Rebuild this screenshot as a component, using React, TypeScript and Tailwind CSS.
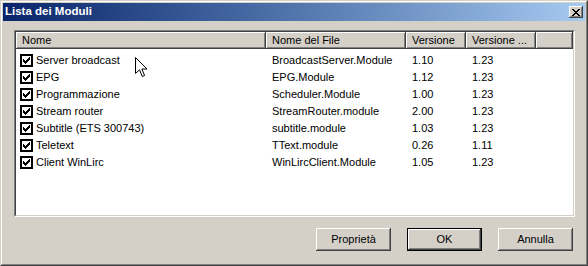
const rows = [
  { name: 'Server broadcast', file: 'BroadcastServer.Module', ver: '1.10', ver2: '1.23' },
  { name: 'EPG', file: 'EPG.Module', ver: '1.12', ver2: '1.23' },
  { name: 'Programmazione', file: 'Scheduler.Module', ver: '1.00', ver2: '1.23' },
  { name: 'Stream router', file: 'StreamRouter.module', ver: '2.00', ver2: '1.23' },
  { name: 'Subtitle (ETS 300743)', file: 'subtitle.module', ver: '1.03', ver2: '1.23' },
  { name: 'Teletext', file: 'TText.module', ver: '0.26', ver2: '1.11' },
  { name: 'Client WinLirc', file: 'WinLircClient.Module', ver: '1.05', ver2: '1.23' },
]

const raised =
  'shadow-[inset_-1px_-1px_#404040,inset_1px_1px_#ffffff,inset_-2px_-2px_#808080]'

function CheckBox() {
  return (
    <svg width="13" height="13" viewBox="0 0 13 13" shapeRendering="crispEdges">
      <rect x="0" y="0" width="13" height="13" fill="#000" />
      <rect x="2" y="2" width="9" height="9" fill="#fff" />
      <rect x="9" y="3" width="1" height="1" fill="#000" />
      <rect x="8" y="4" width="2" height="1" fill="#000" />
      <rect x="3" y="5" width="1" height="1" fill="#000" />
      <rect x="7" y="5" width="3" height="1" fill="#000" />
      <rect x="3" y="6" width="2" height="1" fill="#000" />
      <rect x="6" y="6" width="3" height="1" fill="#000" />
      <rect x="3" y="7" width="5" height="1" fill="#000" />
      <rect x="4" y="8" width="3" height="1" fill="#000" />
      <rect x="5" y="9" width="1" height="1" fill="#000" />
    </svg>
  )
}

function Cursor() {
  return (
    <svg
      width="14"
      height="22"
      viewBox="0 0 14 22"
      className="absolute left-[134px] top-[56px]"
    >
      <path
        d="M0.5 0.5 L0.5 16.5 L4.5 12.8 L7.3 19.5 L9.6 18.5 L6.9 12 L12 12 Z"
        fill="#fff"
        stroke="#000"
        strokeWidth="1"
        strokeLinejoin="miter"
      />
    </svg>
  )
}

function HeaderCell({ label, w }: { label: string; w: string }) {
  return (
    <div className={`${w} ${raised} flex h-full shrink-0 items-center bg-[#d4d0c8] pl-[6px]`}>
      {label}
    </div>
  )
}

function Button({ label, primary }: { label: string; primary?: boolean }) {
  return (
    <button
      className={`flex h-[23px] w-[75px] items-center justify-center bg-[#d4d0c8] text-black ${
        primary
          ? 'border border-black shadow-[inset_-1px_-1px_#404040,inset_1px_1px_#ffffff,inset_-2px_-2px_#808080]'
          : raised
      }`}
    >
      {label}
    </button>
  )
}

export default function App() {
  return (
    <div className="relative h-[266px] w-[588px] border border-b-[#404040] border-l-[#d4d0c8] border-r-[#404040] border-t-[#d4d0c8] font-['Liberation_Sans',Arial,sans-serif] text-[11px] text-black">
      <div className="flex h-full flex-col border border-b-[#808080] border-l-white border-r-[#808080] border-t-white bg-[#d4d0c8] p-px">
        <div className="flex h-[18px] items-center justify-between bg-gradient-to-r from-[#0a246a] to-[#a6caf0] pl-[2px] pr-[2px]">
          <span className="text-[11.5px] font-bold text-white">Lista dei Moduli</span>
          <div className={`${raised} flex h-[12px] w-[14px] items-center justify-center bg-[#d4d0c8]`}>
            <svg width="8" height="7" viewBox="0 0 8 7" shapeRendering="crispEdges">
              <path d="M0 0h2v1H0zM6 0h2v1H6zM1 1h2v1H1zM5 1h2v1H5zM2 2h4v1H2zM3 3h2v1H3zM2 4h4v1H2zM1 5h2v1H1zM5 5h2v1H5zM0 6h2v1H0zM6 6h2v1H6z" fill="#000" />
            </svg>
          </div>
        </div>

        <div className="ml-[11px] mt-[9px] h-[187px] w-[561px] border border-b-white border-l-[#808080] border-r-white border-t-[#808080]">
          <div className="flex h-full flex-col border border-b-[#d4d0c8] border-l-[#404040] border-r-[#d4d0c8] border-t-[#404040] bg-white">
            <div className="flex h-[17px] shrink-0">
              <HeaderCell label="Nome" w="w-[250px]" />
              <HeaderCell label="Nome del File" w="w-[140px]" />
              <HeaderCell label="Versione" w="w-[60px]" />
              <HeaderCell label="Versione ..." w="w-[70px]" />
              <div className={`${raised} h-full flex-1 bg-[#d4d0c8]`} />
            </div>
            <div className="flex flex-col pt-[3px]">
              {rows.map((r) => (
                <div key={r.name} className="flex h-[17px] items-center">
                  <div className="flex w-[250px] shrink-0 items-center gap-[3px] pl-[4px]">
                    <CheckBox />
                    <span>{r.name}</span>
                  </div>
                  <div className="w-[140px] shrink-0 pl-[6px]">{r.file}</div>
                  <div className="w-[60px] shrink-0 pl-[6px]">{r.ver}</div>
                  <div className="w-[70px] shrink-0 pl-[6px]">{r.ver2}</div>
                </div>
              ))}
            </div>
          </div>
        </div>

        <div className="mt-[11px] flex justify-end gap-[16px] pr-[12px]">
          <Button label="Proprietà" />
          <Button label="OK" primary />
          <Button label="Annulla" />
        </div>
      </div>
      <Cursor />
    </div>
  )
}
